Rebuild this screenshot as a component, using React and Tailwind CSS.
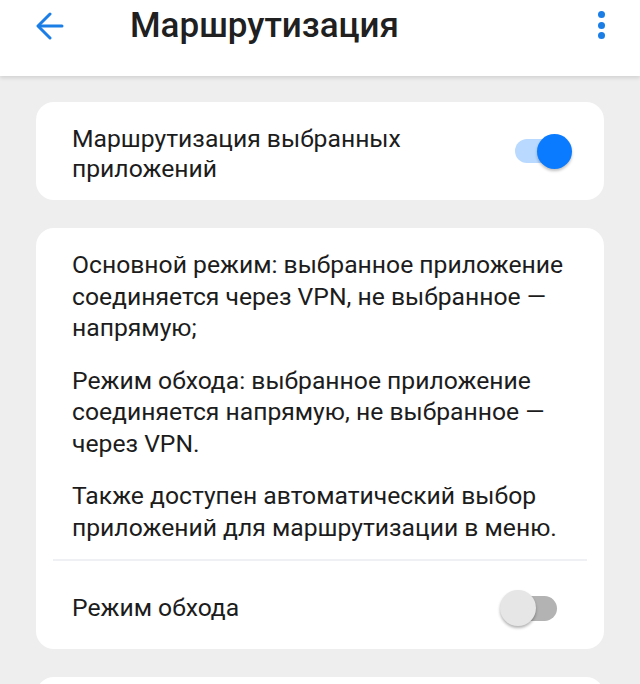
import React from "react";

function Toggle({ on }) {
  if (on) {
    return (
      <div className="relative w-[58px] h-[36px] flex items-center">
        <div className="absolute left-[1px] right-[6px] h-[24px] rounded-full bg-[#b9d9ff]" />
        <div className="absolute right-0 w-[35px] h-[35px] rounded-full bg-[#0a7bff] shadow-[0_2px_3px_rgba(0,0,0,0.25)]" />
      </div>
    );
  }
  return (
    <div className="relative w-[57px] h-[38px] flex items-center">
      <div className="absolute left-[10px] right-0 h-[25px] rounded-full bg-[#b3b3b3]" />
      <div className="absolute left-0 w-[36px] h-[36px] rounded-full bg-[#e6e6e6] shadow-[0_2px_3px_rgba(0,0,0,0.3)]" />
    </div>
  );
}

export default function App() {
  return (
    <div
      className="w-[640px] h-[684px] overflow-hidden bg-[#eeeeee] text-[#1c1c1c]"
      style={{ fontFamily: "Roboto, 'Noto Sans', sans-serif" }}
    >
      <header className="relative z-10 h-[76px] bg-white shadow-[0_2px_4px_rgba(0,0,0,0.12)] flex items-center">
        <div className="w-[130px] h-[76px] flex items-start pt-[12px] pl-[36px]">
          <svg width="28" height="28" viewBox="0 0 28 28" fill="none" stroke="#1a7ee6" strokeWidth="3" strokeLinecap="round" strokeLinejoin="round">
            <path d="M26 14H3" />
            <path d="M14 2L2 14l12 12" />
          </svg>
        </div>
        <div className="flex-1 h-[76px] pt-[6px] text-[35px] leading-[40px] font-medium text-[#202020]">
          Маршрутизация
        </div>
        <div className="w-[80px] h-[76px] flex flex-col items-center pt-[11px] gap-[3.5px] pl-[2px]">
          <span className="w-[7px] h-[7px] rounded-full bg-[#1a7ee6]" />
          <span className="w-[7px] h-[7px] rounded-full bg-[#1a7ee6]" />
          <span className="w-[7px] h-[7px] rounded-full bg-[#1a7ee6]" />
        </div>
      </header>

      <main className="px-[36px] pt-[26px] flex flex-col gap-[28px]">
        <section className="bg-white rounded-[18px] h-[98px] pl-[36px] pr-[32px] flex items-center justify-between">
          <div className="text-[24.7px] leading-[30px] pt-[6px]">
            Маршрутизация выбранных
            <br />
            приложений
          </div>
          <Toggle on />
        </section>

        <section className="bg-white rounded-[18px] pt-[21px]">
          <div className="pl-[36px] pr-[16px] text-[24.7px] leading-[31.5px] flex flex-col gap-[21px]">
            <p>
              Основной режим: выбранное приложение соединяется через VPN, не выбранное — напрямую;
            </p>
            <p>
              Режим обхода: выбранное приложение соединяется напрямую, не выбранное — через VPN.
            </p>
            <p>
              Также доступен автоматический выбор приложений для маршрутизации в меню.
            </p>
          </div>
          <div className="mx-[17px] mt-[16px] h-[2px] bg-[#eef0f4]" />
          <div className="pl-[36px] pr-[47px] pt-[28px] pb-[22px] flex items-center justify-between">
            <span className="text-[24.7px] leading-[31.5px]">Режим обхода</span>
            <Toggle on={false} />
          </div>
        </section>

        <section className="bg-white rounded-[18px] h-[80px]" />
      </main>
    </div>
  );
}
